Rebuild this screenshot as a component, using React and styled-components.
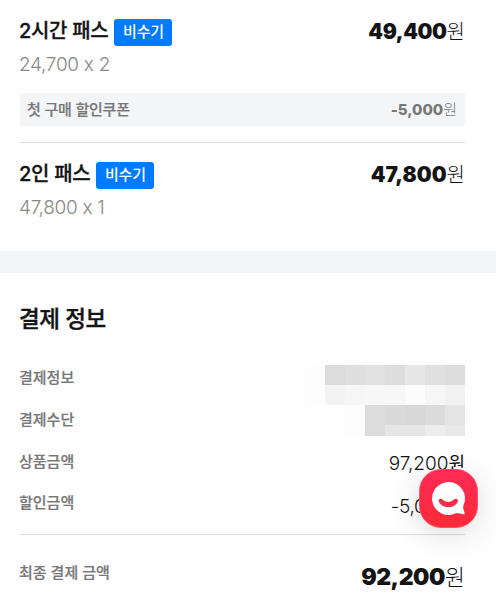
import React from "react";
import styled, { createGlobalStyle } from "styled-components";

const GlobalStyle = createGlobalStyle`
  * {
    box-sizing: border-box;
  }

  body {
    margin: 0;
    background: #fefefe;
    color: #141414;
    font-family: Inter, "Noto Sans CJK KR", sans-serif;
    font-feature-settings: "calt" 0;
    overflow: hidden;
  }
`;

const Page = styled.main`
  height: 600px;
  overflow: hidden;
`;

const Orders = styled.section`
  height: 251px;
  padding: 0 31px 0 20px;
`;

const Order = styled.article`
  padding: 15px 0 16px;
  border-top: ${(props) => (props.$divided ? "1px solid #dcdcdc" : "0")};
`;

const OrderHead = styled.div`
  display: flex;
  align-items: center;
  justify-content: space-between;
  height: 32px;
`;

const OrderName = styled.div`
  display: flex;
  align-items: center;
  gap: 6px;
  margin-left: -1px;
`;

const Title = styled.h3`
  margin: 0;
  font-size: 20px;
  line-height: 30px;
  font-weight: 500;
  letter-spacing: -0.3px;
  white-space: nowrap;
  -webkit-text-stroke: 0.3px currentColor;
`;

const Badge = styled.span`
  width: 58px;
  height: 27px;
  margin-top: 3px;
  border-radius: 3px;
  background: #007bff;
  color: #fff;
  font-size: 15px;
  line-height: 25px;
  font-weight: 500;
  letter-spacing: -0.2px;
  text-align: center;
`;

const Price = styled.span`
  display: flex;
  align-items: baseline;
  font-size: ${(props) => props.$size}px;
  line-height: 30px;
  font-weight: ${(props) => props.$weight || 900};
  letter-spacing: ${(props) => props.$spacing || "0"};
  white-space: nowrap;
`;

const Won = styled.span`
  font-family: "Noto Sans CJK KR", sans-serif;
  font-size: ${(props) => props.$size}px;
  font-weight: ${(props) => props.$weight || 300};
  letter-spacing: 0;
`;

const Quantity = styled.p`
  margin: 0 0 0 -1px;
  padding-top: 3px;
  color: #888;
  font-size: 19px;
  line-height: 29px;
  font-weight: 300;
  letter-spacing: -0.3px;
`;

const Coupon = styled.div`
  display: flex;
  align-items: center;
  justify-content: space-between;
  height: 33px;
  margin-top: 14px;
  padding: 0 8px 0 7px;
  border-radius: 2px;
  background: #f4f5f7;
  color: #777;
  font-size: 15px;
`;

const CouponName = styled.span`
  margin-top: -3px;
  font-weight: 500;
  letter-spacing: -0.2px;
  -webkit-text-stroke: 0.2px currentColor;
`;

const Gap = styled.div`
  height: 22px;
  background: #f4f5f8;
`;

const Payment = styled.section`
  padding: 29px 31px 0 20px;
`;

const Heading = styled.h2`
  margin: 0 0 0 -1px;
  font-size: 22.5px;
  line-height: 34px;
  font-weight: 500;
  letter-spacing: -0.4px;
  -webkit-text-stroke: 0.4px currentColor;
`;

const Details = styled.div`
  display: flex;
  justify-content: space-between;
  height: 199px;
  padding-top: 21px;
  border-bottom: 1px solid #dcdcdc;
`;

const Labels = styled.div`
  display: flex;
  flex-direction: column;
`;

const Label = styled.span`
  margin-left: -1px;
  color: #777;
  font-size: 15px;
  line-height: 41.8px;
  font-weight: 500;
  letter-spacing: 0;
  -webkit-text-stroke: 0.2px currentColor;
`;

const Values = styled.div`
  display: flex;
  flex-direction: column;
  align-items: flex-end;
  padding-top: 8px;
`;

const Mosaic = styled.div`
  display: grid;
  grid-template-columns: repeat(8, 20px);
  grid-template-rows: 20px 20px 20px 11px;
  margin-bottom: 11px;
`;

const Tile = styled.span`
  background: ${(props) => props.$color};
`;

const Amounts = styled.div`
  display: flex;
  flex-direction: column;
  align-items: flex-end;
  gap: 11px;
`;

const Total = styled.div`
  display: flex;
  align-items: flex-start;
  justify-content: space-between;
  padding-top: 17px;
`;

const TotalPrice = styled(Price)`
  margin-top: 8px;
`;

const ChatButton = styled.button`
  position: fixed;
  left: 419px;
  top: 469px;
  width: 59px;
  height: 59px;
  padding: 0;
  border: 1px solid #ff5268;
  border-radius: 22px;
  background: linear-gradient(#ff2b55, #fa2a38);
  box-shadow: 0 6px 28px rgba(0, 0, 0, 0.13);
`;

const tiles = [
  "#fdfdfd", "#dcdcdc", "#dfdfdf", "#e2e2e2", "#dddddd", "#e7e7e7", "#e0e0e0", "#dddddd",
  "#fdfdfd", "#f3f3f3", "#f6f6f6", "#f7f7f7", "#f7f7f7", "#fcfcfc", "#f6f6f6", "#f1f1f1",
  "#fefefe", "#fefefe", "#fdfdfd", "#dcdcdc", "#dadada", "#d8d8d8", "#dbdbdb", "#e4e4e4",
  "#fefefe", "#fefefe", "#fdfdfd", "#dcdcdc", "#e6e6e6", "#e6e6e6", "#ededed", "#e9e9e9",
];

const labels = ["결제정보", "결제수단", "상품금액", "할인금액"];

export default function App() {
  return (
    <Page>
      <GlobalStyle />
      <Orders>
        <Order>
          <OrderHead>
            <OrderName>
              <Title>2시간 패스</Title>
              <Badge>비수기</Badge>
            </OrderName>
            <Price $size={21} $spacing="-0.4px">49,400<Won $size={20}>원</Won></Price>
          </OrderHead>
          <Quantity>24,700 x 2</Quantity>
          <Coupon>
            <CouponName>첫 구매 할인쿠폰</CouponName>
            <Price $size={15} $weight={800}>-5,000<Won $size={15}>원</Won></Price>
          </Coupon>
        </Order>
        <Order $divided>
          <OrderHead>
            <OrderName>
              <Title>2인 패스</Title>
              <Badge>비수기</Badge>
            </OrderName>
            <Price $size={21}>47,800<Won $size={20}>원</Won></Price>
          </OrderHead>
          <Quantity>47,800 x 1</Quantity>
        </Order>
      </Orders>
      <Gap />
      <Payment>
        <Heading>결제 정보</Heading>
        <Details>
          <Labels>
            {labels.map((label) => (
              <Label key={label}>{label}</Label>
            ))}
          </Labels>
          <Values>
            <Mosaic>
              {tiles.map((color, i) => (
                <Tile key={i} $color={color} />
              ))}
            </Mosaic>
            <Amounts>
              <Price $size={19} $weight={300}>97,200<Won $size={18} $weight={400}>원</Won></Price>
              <Price $size={19} $weight={300} $spacing="-0.3px">-5,000<Won $size={18} $weight={400}>원</Won></Price>
            </Amounts>
          </Values>
        </Details>
        <Total>
          <Label>최종 결제 금액</Label>
          <TotalPrice $size={23} $spacing="-0.5px">92,200<Won $size={22}>원</Won></TotalPrice>
        </Total>
      </Payment>
      <ChatButton aria-label="채팅 상담">
        <svg width="57" height="57" viewBox="0 0 57 57" fill="none">
          <path
            d="M28.5 12A16.5 16.5 0 1 0 35.8 43.3C38.5 43 41 43.8 43.5 44.3C44.4 44.4 44.9 43.8 44.6 43C44 40.5 42.5 38.2 43.3 35.8A16.5 16.5 0 0 0 28.5 12Z"
            fill="#fff"
          />
          <path
            d="M18.6 30.6C18.8 28.6 21.2 28 22.6 29.6C25.5 32.7 31 32.7 33.9 29.6C35.3 28 37.8 28.6 38 30.6C36.5 39.5 20.4 39.5 18.6 30.6Z"
            fill="#f72c46"
          />
        </svg>
      </ChatButton>
    </Page>
  );
}
